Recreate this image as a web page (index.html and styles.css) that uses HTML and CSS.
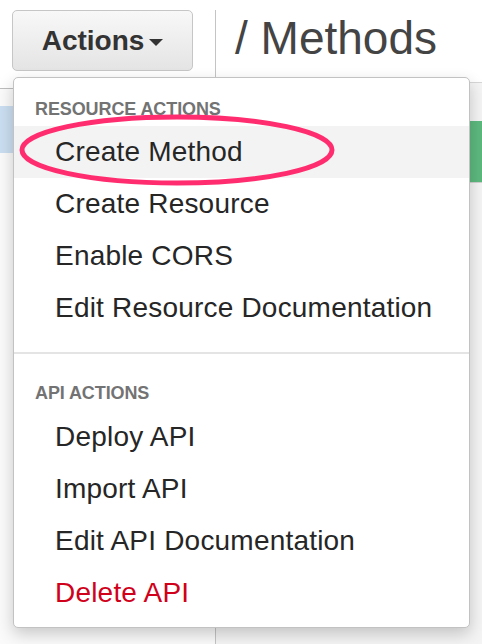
FILE: index.html
```html
<!DOCTYPE html>
<html>
<head>
<meta charset="utf-8">
<link rel="stylesheet" href="styles.css">
</head>
<body>
<div class="page">
  <div class="left">
    <div class="toolbar">
      <button class="actions-btn">Actions<span class="caret"></span></button>
    </div>
    <div class="tree">
      <div class="tree-row selected"></div>
    </div>
  </div>
  <div class="right">
    <div class="title">/ Methods</div>
    <div class="resource-area">
      <div class="method-bar"></div>
    </div>
  </div>

  <div class="dropdown">
    <div class="menu-header first">Resource Actions</div>
    <div class="menu-item hover">Create Method</div>
    <div class="menu-item">Create Resource</div>
    <div class="menu-item">Enable CORS</div>
    <div class="menu-item">Edit Resource Documentation</div>
    <div class="menu-divider"></div>
    <div class="menu-header">API Actions</div>
    <div class="menu-item">Deploy API</div>
    <div class="menu-item">Import API</div>
    <div class="menu-item">Edit API Documentation</div>
    <div class="menu-item danger">Delete API</div>
  </div>

  <svg class="annotation" width="482" height="644" viewBox="0 0 482 644">
    <ellipse cx="177" cy="150" rx="155" ry="33" fill="none" stroke="#ff2d6f" stroke-width="5"/>
  </svg>
</div>
</body>
</html>
```

FILE: styles.css
```css
* { box-sizing: border-box; }

html, body {
  margin: 0;
  padding: 0;
  background: #ffffff;
  font-family: "Liberation Sans", Arial, Helvetica, sans-serif;
}

.page {
  position: relative;
  width: 482px;
  height: 644px;
  overflow: hidden;
  display: flex;
  padding-top: 10px;
}

.left {
  width: 216px;
  flex: none;
  border-right: 1px solid #c4c4c4;
  display: flex;
  flex-direction: column;
}

.toolbar {
  height: 79px;
  padding-left: 12px;
  border-bottom: 1px solid #bdbdbd;
}

.actions-btn {
  width: 181px;
  height: 61px;
  border: 1px solid #c6c6c6;
  border-radius: 5px;
  background: linear-gradient(#f8f8f8, #e4e4e4);
  font-family: "Liberation Sans", Arial, Helvetica, sans-serif;
  font-weight: bold;
  font-size: 28px;
  color: #333333;
  display: flex;
  align-items: center;
  justify-content: center;
  padding: 0;
}

.caret {
  display: inline-block;
  width: 0;
  height: 0;
  margin-left: 5px;
  margin-top: 3px;
  border-top: 7px solid #333333;
  border-left: 7px solid transparent;
  border-right: 7px solid transparent;
}

.tree {
  flex: 1;
  padding-top: 17px;
  background: #fafafa;
}

.tree-row {
  height: 47px;
}

.tree-row.selected {
  background: #cadef1;
}

.right {
  flex: 1;
  display: flex;
  flex-direction: column;
}

.title {
  height: 73px;
  padding-left: 19px;
  font-size: 46px;
  line-height: 56px;
  color: #444444;
  border-bottom: 1px solid #d6d6d6;
  white-space: nowrap;
}

.resource-area {
  flex: 1;
  background: #f4f4f4;
  padding-top: 38px;
}

.method-bar {
  height: 62px;
  background: #5db97e;
  border-bottom: 1px solid #cfcfcf;
}

.dropdown {
  position: absolute;
  left: 13px;
  top: 77px;
  width: 457px;
  height: 551px;
  background: #ffffff;
  border: 1px solid #c2c2c2;
  border-radius: 5px;
  box-shadow: 0 6px 16px rgba(0, 0, 0, 0.2);
}

.menu-header {
  padding: 29px 21px 8px;
  font-size: 18px;
  line-height: 20px;
  font-weight: bold;
  color: #737373;
  text-transform: uppercase;
  letter-spacing: -0.1px;
}

.menu-header.first {
  padding-top: 21px;
  padding-bottom: 7px;
}

.menu-item {
  height: 52px;
  padding-left: 41px;
  font-size: 28px;
  line-height: 52px;
  letter-spacing: 0.2px;
  color: #262626;
  white-space: nowrap;
}

.menu-item.hover {
  background: #f3f3f3;
}

.menu-item.danger {
  color: #d0011b;
}

.menu-divider {
  height: 2px;
  margin: 18px 0 0;
  background: #e4e4e4;
}

.annotation {
  position: absolute;
  left: 0;
  top: 0;
  pointer-events: none;
}
```
